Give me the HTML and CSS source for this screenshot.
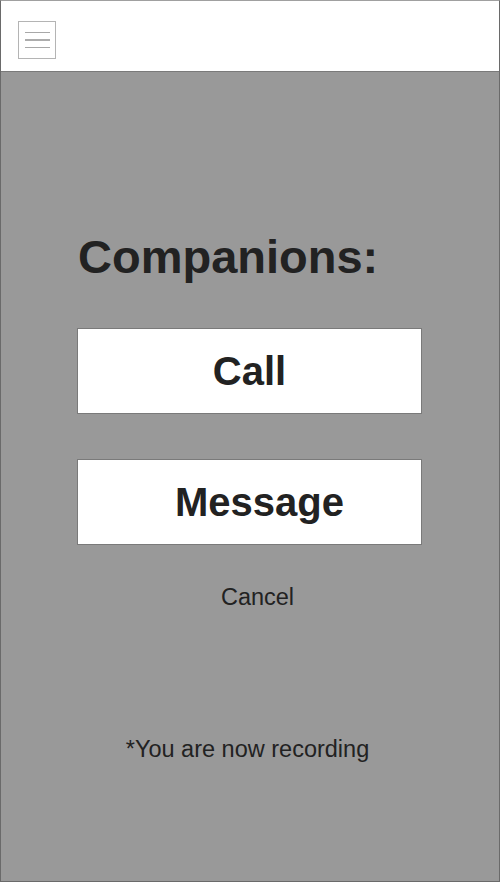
FILE: index.html
```html
<!DOCTYPE html>
<html>
<head>
<meta charset="utf-8">
<link rel="stylesheet" href="styles.css">
</head>
<body>
<div class="screen">
  <header class="topbar">
    <div class="menu-btn">
      <span class="bar"></span>
      <span class="bar bar-mid"></span>
      <span class="bar"></span>
    </div>
  </header>
  <main class="content">
    <h1 class="title">Companions:</h1>
    <div class="btn btn-call">Call</div>
    <div class="btn btn-message">Message</div>
    <div class="cancel">Cancel</div>
    <div class="note">*You are now recording</div>
  </main>
</div>
</body>
</html>
```
FILE: styles.css
```css
html, body {
  margin: 0;
  padding: 0;
}
body {
  font-family: "Liberation Sans", Arial, Helvetica, sans-serif;
  color: #222;
  background: #999;
}
.screen {
  box-sizing: border-box;
  width: 500px;
  height: 882px;
  border: 1px solid #6a6a6a;
  border-top-color: #a0a0a0;
  background: #999;
  display: flex;
  flex-direction: column;
}
.topbar {
  box-sizing: border-box;
  height: 71px;
  background: #fff;
  border-bottom: 1px solid #7a7a7a;
  padding: 20px 0 0 17px;
  flex: none;
}
.menu-btn {
  box-sizing: border-box;
  width: 38px;
  height: 38px;
  border: 1px solid #b4b4b4;
  display: flex;
  flex-direction: column;
  justify-content: center;
  align-items: center;
  gap: 6px;
}
.bar {
  display: block;
  width: 25px;
  height: 1px;
  background: #a8a8a8;
}
.bar-mid {
  height: 2px;
  background: #acacac;
}
.content {
  display: flex;
  flex-direction: column;
  padding-left: 76px;
}
.title {
  margin: 161px 0 0 1px;
  font-size: 47px;
  line-height: 47px;
  font-weight: bold;
  color: #222;
}
.btn {
  box-sizing: border-box;
  width: 345px;
  height: 86px;
  background: #fff;
  border: 1px solid #7a7a7a;
  display: flex;
  align-items: center;
  justify-content: center;
  font-size: 40px;
  font-weight: bold;
  color: #222;
}
.btn-call {
  margin-top: 48px;
  height: 86px;
}
.btn-message {
  margin-top: 45px;
  padding-left: 20px;
}
.cancel {
  width: 345px;
  box-sizing: border-box;
  padding-left: 16px;
  text-align: center;
  margin-top: 40px;
  font-size: 23.5px;
  line-height: 24px;
  color: #222;
}
.note {
  width: 345px;
  box-sizing: border-box;
  padding-right: 4px;
  text-align: center;
  margin-top: 128px;
  font-size: 23.5px;
  line-height: 24px;
  color: #222;
}
```
